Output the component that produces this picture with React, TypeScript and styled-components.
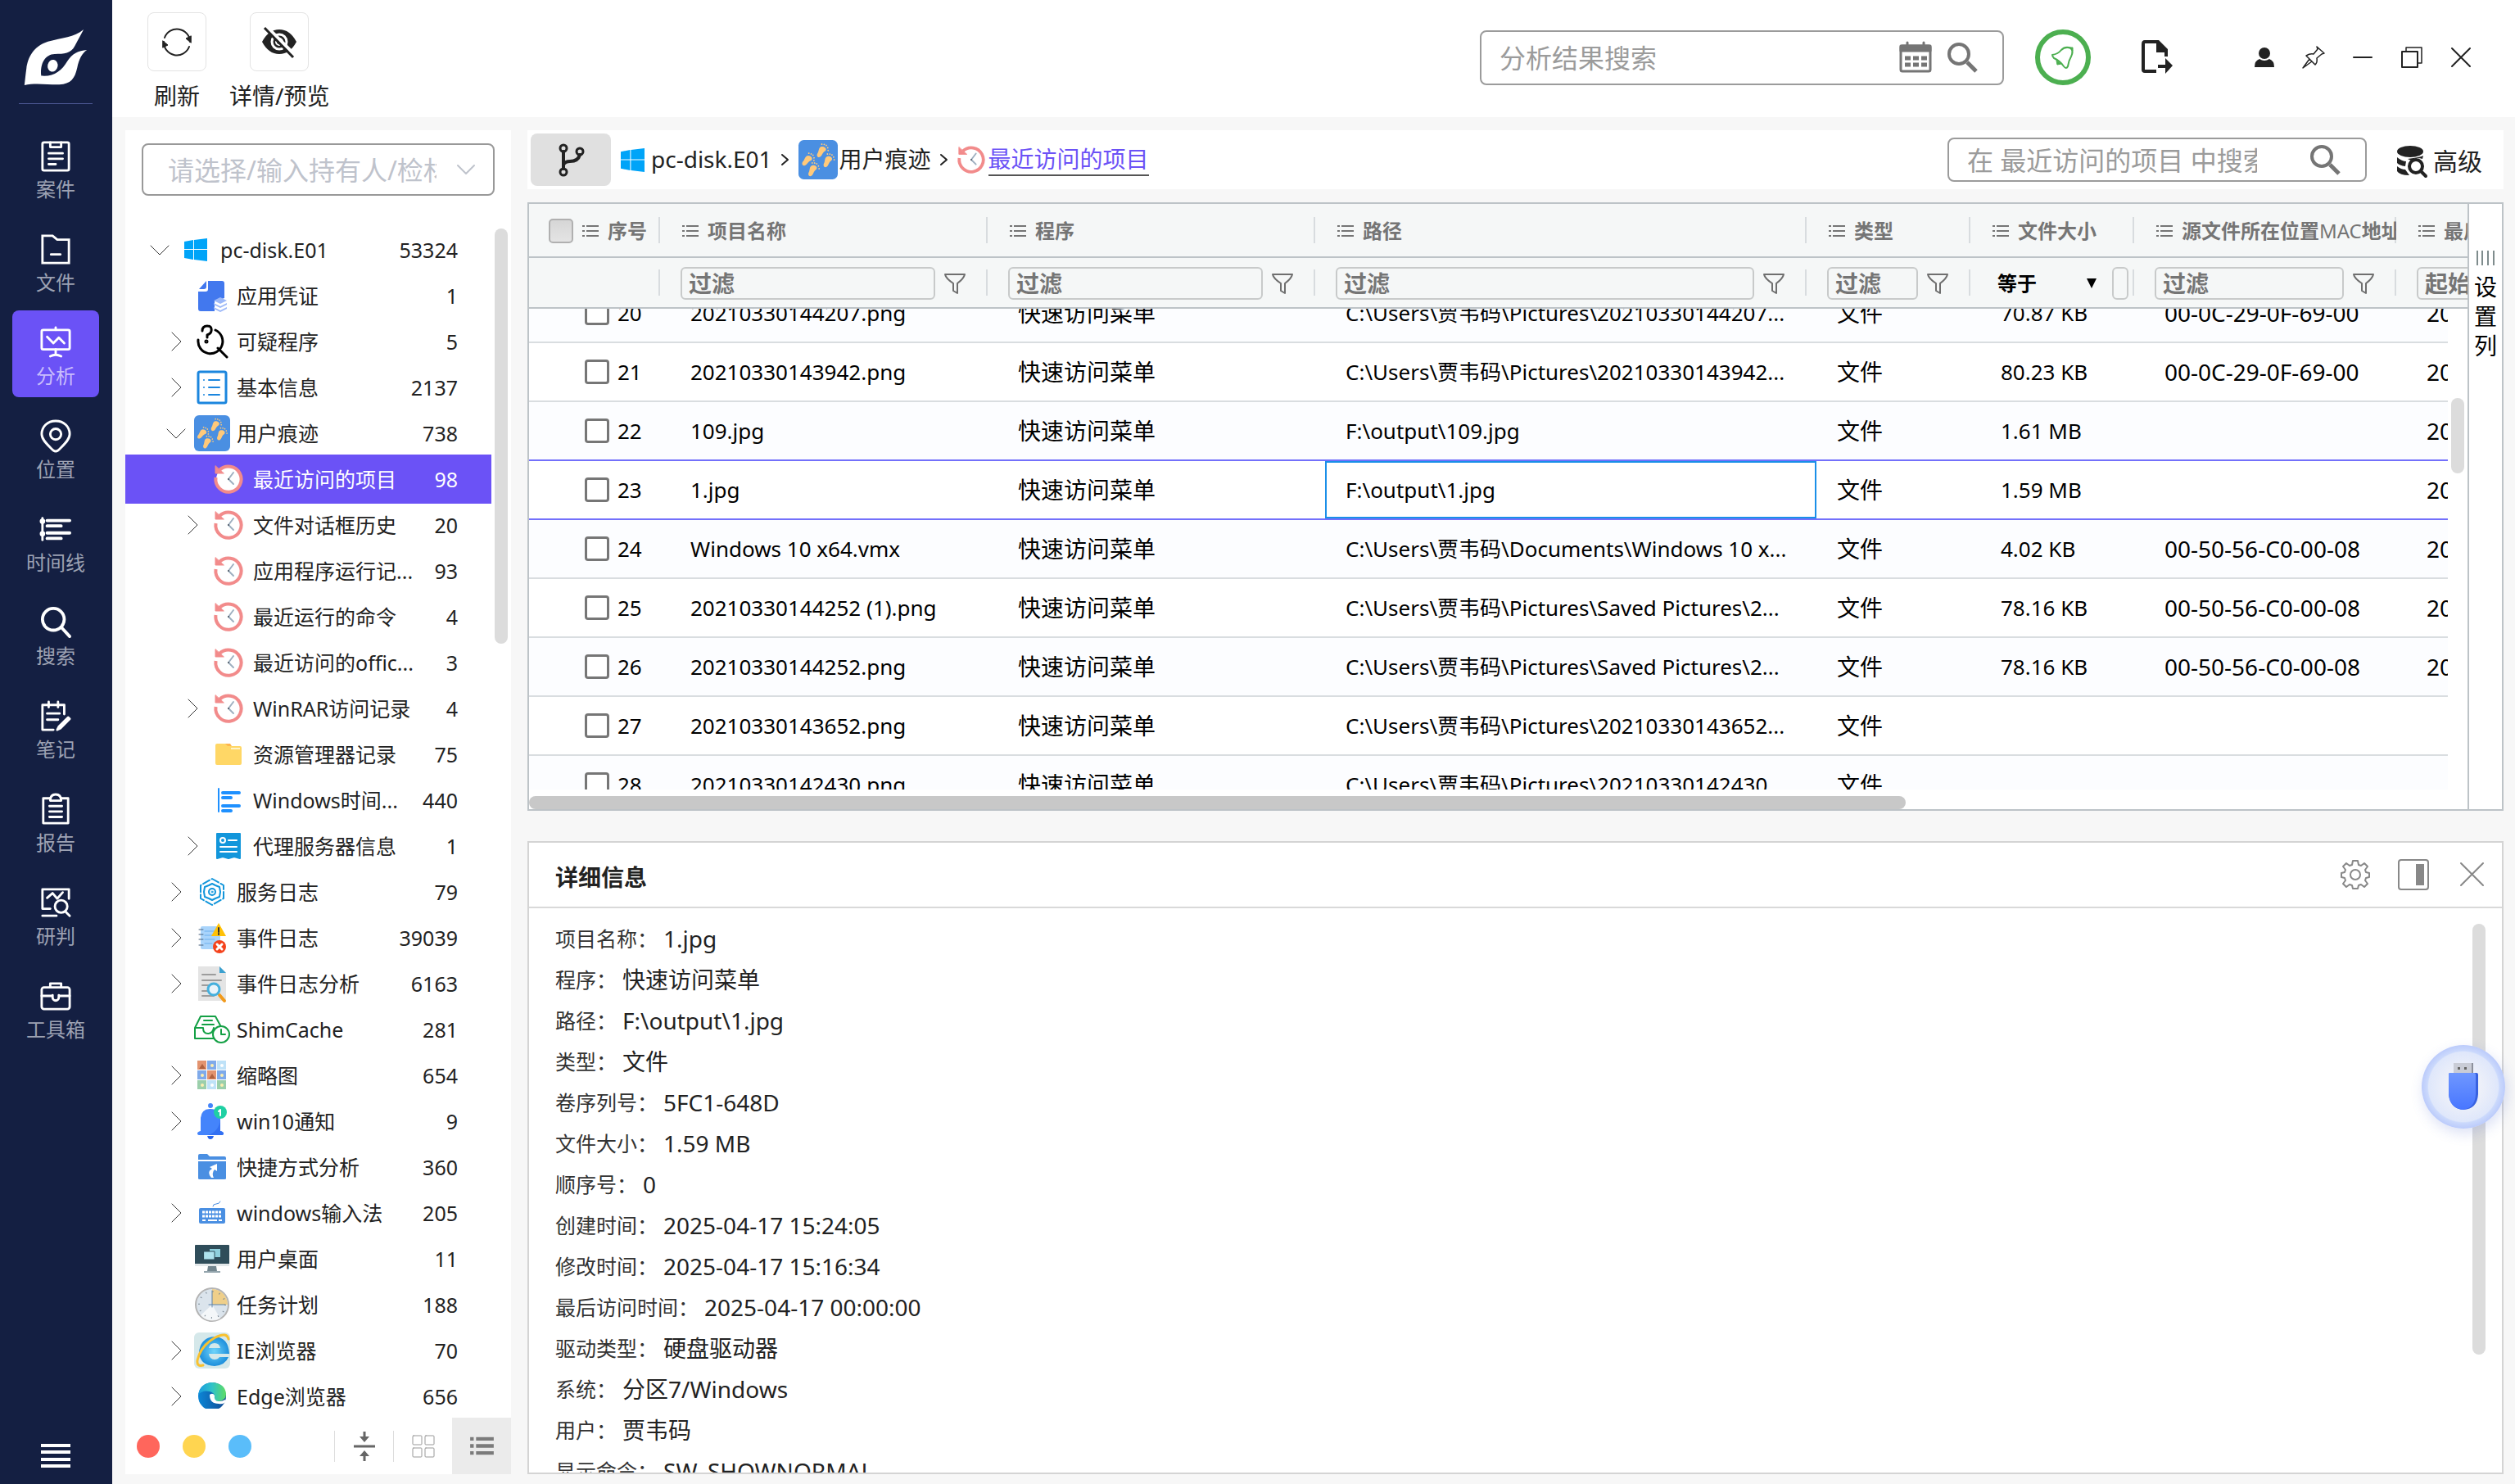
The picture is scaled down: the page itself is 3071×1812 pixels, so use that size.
import React, { useLayoutEffect, useRef } from "react";
import styled, { createGlobalStyle, css } from "styled-components";

const GlobalStyle = createGlobalStyle`
  *, *::before, *::after { box-sizing: border-box; }
  body { margin: 0; background: #f7f7f7; }
  body, button, input, select {
    font-family: "Noto Sans", "Noto Sans CJK SC", sans-serif;
    color: #222;
  }
  button { background: none; border: 0; padding: 0; cursor: pointer; }
  input, select { outline: none; }
  svg { display: block; flex: none; overflow: visible; }
`;

/* ---------- frame ---------- */

const Shell = styled.div`
  display: flex;
  height: 100vh;
  overflow: hidden;
`;

const Sidebar = styled.aside`
  flex: none;
  width: 137px;
  display: flex;
  flex-direction: column;
  align-items: center;
  background: #141f42;
  padding: 35px 16px 20px 15px;
`;

const SideRule = styled.hr`
  width: 90px;
  margin: 21px 0 24px;
  border: 0;
  border-top: 1px solid #4a5590;
`;

const NavList = styled.nav`
  flex: 1;
  display: flex;
  flex-direction: column;
  gap: 8px;
  width: 106px;
`;

const NavButton = styled.button<{ $active?: boolean }>`
  display: flex;
  flex-direction: column;
  align-items: center;
  gap: 3px;
  height: 106px;
  padding: 19px 0 8px;
  border-radius: 8px;
  font-size: 24px;
  line-height: 36px;
  color: ${(p) => (p.$active ? "#c8bdfc" : "#9da2b3")};
  background: ${(p) => (p.$active ? "#6b52f6" : "transparent")};
`;

const Workspace = styled.div`
  flex: 1;
  min-width: 0;
  display: flex;
  flex-direction: column;
`;

/* ---------- header ---------- */

const TopBar = styled.header`
  flex: none;
  display: flex;
  height: 143px;
  padding: 0 36px 0 43px;
  background: #fff;
`;

const ToolGroup = styled.div`
  display: flex;
  gap: 28px;
  padding-top: 15px;
`;

const ToolButton = styled.button`
  display: flex;
  flex-direction: column;
  align-items: center;
  gap: 12px;
  font-size: 28px;
  line-height: 36px;
`;

const ToolTile = styled.span`
  display: grid;
  place-items: center;
  width: 72px;
  height: 72px;
  border: 1px solid #e3e3e3;
  border-radius: 8px;
`;

const TopRight = styled.div`
  display: flex;
  align-items: center;
  height: 140px;
  margin-left: auto;
`;

const SearchBox = styled.div<{ $width: number; $height: number }>`
  display: flex;
  align-items: center;
  justify-content: space-between;
  gap: 18px;
  width: ${(p) => p.$width}px;
  height: ${(p) => p.$height}px;
  padding: 0 30px 0 22px;
  border: 2px solid #9b9b9b;
  border-radius: 8px;
  background: #fff;
`;

const BareInput = styled.input<{ $width?: number }>`
  flex: ${(p) => (p.$width ? `0 0 ${p.$width}px` : "1")};
  min-width: 0;
  height: 48px;
  padding: 0;
  border: 0;
  background: transparent;
  font-size: 32px;
  &::placeholder { color: #9b9b9b; opacity: 1; }
`;

const IconButton = styled.button`
  display: grid;
  place-items: center;
`;

const NoticeButton = styled.button`
  display: grid;
  place-items: center;
  width: 68px;
  height: 68px;
  margin: 0 62px 0 38px;
  border: 6px solid #4caf50;
  border-radius: 50%;
`;

const WindowButtons = styled.div`
  display: flex;
  margin-left: 82px;
`;

const WindowButton = styled(IconButton)`
  width: 60px;
  height: 60px;
`;

/* ---------- body ---------- */

const Body = styled.div`
  flex: 1;
  min-height: 0;
  display: flex;
  gap: 20px;
  padding: 16px 14px 12px 16px;
`;

const TreePanel = styled.section`
  flex: none;
  width: 471px;
  display: flex;
  flex-direction: column;
  background: #fff;
`;

const OwnerPicker = styled.div`
  flex: none;
  display: flex;
  align-items: center;
  justify-content: space-between;
  height: 64px;
  margin: 16px 20px 38px;
  padding: 0 22px 0 30px;
  border: 2px solid #999;
  border-radius: 8px;
  input::placeholder { color: #bfc3cc; }
`;

const TreeViewport = styled.div`
  flex: 1;
  min-height: 0;
  display: flex;
  gap: 4px;
  padding-right: 4px;
  overflow: hidden;
`;

const TreeList = styled.ul`
  flex: 1;
  margin: 0;
  padding: 0;
  list-style: none;
`;

const TreeRow = styled.button<{ $level: number; $active?: boolean }>`
  display: flex;
  align-items: center;
  width: 100%;
  height: 56px;
  padding: 0 41px 0 ${(p) => 27 + p.$level * 20}px;
  font-size: 25px;
  line-height: 36px;
  white-space: nowrap;
  text-align: left;
  ${(p) =>
    p.$active &&
    css`
      height: 60px;
      margin: -2px 0;
      background: #6b52f6;
      color: #fff;
    `}
`;

const TreeToggle = styled.span`
  display: grid;
  place-items: center;
  width: 30px;
  margin-right: 7px;
`;

const TreeIcon = styled.span`
  display: grid;
  place-items: center;
  width: 44px;
  height: 44px;
  margin-right: 8px;
`;

const TreeCount = styled.span`
  margin-left: auto;
`;

const ScrollThumb = styled.div<{ $length: number; $top?: number }>`
  flex: none;
  width: 16px;
  height: ${(p) => p.$length}px;
  margin-top: ${(p) => p.$top ?? 0}px;
  border-radius: 8px;
  background: #dcdcdc;
`;

const TreeFooter = styled.div`
  flex: none;
  display: flex;
  align-items: center;
  height: 69px;
  margin-top: 11px;
  padding-left: 14px;
`;

const Dot = styled.button<{ $color: string }>`
  width: 28px;
  height: 28px;
  margin-right: 28px;
  border-radius: 50%;
  background: ${(p) => p.$color};
`;

const FooterTools = styled.div`
  display: flex;
  align-items: center;
  margin-left: auto;
`;

const FooterTool = styled.button<{ $active?: boolean; $divided?: boolean }>`
  display: grid;
  place-items: center;
  width: 72px;
  height: ${(p) => (p.$active ? 69 : 38)}px;
  border-left: ${(p) => (p.$divided ? "1px solid #ddd" : "0")};
  background: ${(p) => (p.$active ? "#ebebeb" : "transparent")};
`;

const Main = styled.main`
  flex: 1;
  min-width: 0;
  display: flex;
  flex-direction: column;
`;

const PathBar = styled.div`
  flex: none;
  display: flex;
  align-items: center;
  height: 72px;
  margin-bottom: 16px;
  padding: 0 26px 0 4px;
  background: #fff;
  font-size: 28px;
  line-height: 38px;
`;

const BranchButton = styled(IconButton)`
  width: 98px;
  height: 64px;
  margin-right: 12px;
  border-radius: 8px;
  background: #e0e0e0;
`;

const Crumb = styled.a<{ $current?: boolean; $gap?: number }>`
  display: flex;
  align-items: center;
  gap: ${(p) => p.$gap ?? 4}px;
  color: ${(p) => (p.$current ? "#6b52f6" : "#222")};
  text-decoration: none;
  span { border-bottom: 2px solid ${(p) => (p.$current ? "#555" : "transparent")}; }
`;

const CrumbMark = styled.span`
  display: grid;
  place-items: center;
  width: 32px;
`;

const PathTools = styled.div`
  display: flex;
  align-items: center;
  gap: 36px;
  margin-left: auto;
`;

const AdvancedButton = styled.button`
  display: flex;
  align-items: center;
  gap: 8px;
  padding-top: 4px;
  font-size: 30px;
  line-height: 38px;
`;

/* ---------- data grid ---------- */

const GridPanel = styled.section`
  flex: 743 1 0;
  min-height: 0;
  display: flex;
  border: 2px solid #bdc3c7;
  background: #fff;
`;

const GridMain = styled.div`
  flex: 1;
  min-width: 0;
  display: flex;
  flex-direction: column;
`;

const GridHead = styled.div`
  flex: none;
  overflow: hidden;
  background: #f5f7f7;
`;

const GridTable = styled.table`
  table-layout: fixed;
  border-collapse: separate;
  border-spacing: 0;
  th, td { padding: 0; text-align: left; font-weight: 400; }
`;

const HeadCell = styled.th<{ $height: number }>`
  height: ${(p) => p.$height}px;
  border-bottom: 2px solid #bdc3c7;
  background: linear-gradient(#d8dcdf, #d8dcdf) right center / 2px 32px no-repeat;
`;

const HeadLabel = styled.div<{ $first?: boolean }>`
  display: flex;
  align-items: center;
  gap: 11px;
  padding: 2px 0 0 ${(p) => (p.$first ? 24 : 27)}px;
  overflow: hidden;
  font-size: 24px;
  line-height: 36px;
  white-space: nowrap;
  color: #757575;
  b { font-weight: 700; }
`;

const AllBox = styled.input`
  appearance: none;
  flex: none;
  width: 30px;
  height: 30px;
  margin: 0;
  border: 2px solid #b0b0b0;
  border-radius: 5px;
  background: linear-gradient(#d6d6d6, #e4e4e4);
`;

const FilterCell = styled.div`
  display: flex;
  align-items: center;
  gap: 11px;
  padding: 2px 27px 0 25px;
`;

const SizeFilterCell = styled(FilterCell)`
  padding: 2px 7px 0 33px;
  gap: 19px;
`;

const FilterInput = styled.input`
  flex: 1;
  min-width: 0;
  height: 40px;
  padding: 0 8px;
  border: 2px solid #c8caca;
  border-radius: 6px;
  background: transparent;
  font-size: 28px;
  font-weight: 700;
  &::placeholder { color: #757575; opacity: 1; }
`;

const OperatorPick = styled.label`
  flex: none;
  display: flex;
  align-items: center;
  justify-content: space-between;
  width: 121px;
  select {
    appearance: none;
    width: 104px;
    padding: 0;
    border: 0;
    background: transparent;
    font-size: 24px;
    font-weight: 700;
    line-height: 36px;
    color: #000;
  }
`;

const GridBody = styled.div`
  flex: 1;
  min-height: 0;
  display: flex;
  gap: 4px;
  padding-right: 4px;
`;

const RowsViewport = styled.div`
  flex: 1;
  min-width: 0;
  overflow: hidden;
`;

const DataRow = styled.tr<{ $shade: boolean; $line: string }>`
  color: #000;
  td {
    height: 72px;
    border-bottom: 2px solid ${(p) => p.$line};
    background: ${(p) => (p.$shade ? "#fcfdff" : "#fff")};
  }
`;

const CellText = styled.div<{ $small?: boolean; $focus?: boolean }>`
  height: 70px;
  padding-left: 25px;
  overflow: hidden;
  font-size: ${(p) => (p.$small ? 26 : 28)}px;
  line-height: 70px;
  white-space: nowrap;
  box-shadow: ${(p) => (p.$focus ? "inset 0 0 0 2px #1a8fe8" : "none")};
`;

const NumberCell = styled.label`
  display: flex;
  align-items: center;
  gap: 10px;
  padding-left: 68px;
  font-size: 26px;
  input {
    appearance: none;
    width: 30px;
    height: 30px;
    margin: 0;
    border: 3px solid #767676;
    border-radius: 4px;
    background: #fff;
  }
`;

const HScroll = styled.div`
  flex: none;
  height: 24px;
  padding-top: 8px;
  div {
    width: 71%;
    height: 16px;
    border-radius: 8px;
    background: #c8c8c8;
  }
`;

const ColumnsTab = styled.button`
  flex: none;
  display: flex;
  flex-direction: column;
  align-items: center;
  gap: 8px;
  width: 42px;
  padding-top: 57px;
  border-left: 2px solid #bdc3c7;
  font-size: 28px;
  line-height: 36px;
  color: #000;
  span { width: 28px; }
`;

/* ---------- details ---------- */

const DetailPanel = styled.section`
  flex: 773 1 0;
  min-height: 0;
  display: flex;
  flex-direction: column;
  margin-top: 37px;
  border: 2px solid #d4d4d4;
  background: #fff;
`;

const DetailHead = styled.div`
  flex: none;
  display: flex;
  align-items: center;
  justify-content: space-between;
  height: 80px;
  padding: 0 17px 0 32px;
  border-bottom: 2px solid #d9d9d9;
  h2 { margin: 6px 0 0; font-size: 28px; line-height: 38px; }
`;

const DetailTools = styled.div`
  display: flex;
  gap: 34px;
`;

const DetailBody = styled.div`
  flex: 1;
  min-height: 0;
  display: flex;
  justify-content: space-between;
  padding: 12px 20px 0 32px;
  overflow: hidden;
`;

const Fields = styled.dl`
  margin: 0;
  div { display: flex; gap: 7px; height: 50px; line-height: 50px; white-space: nowrap; }
  dt { font-size: 25px; color: #333; }
  dd { margin: 0; font-size: 28px; }
`;

const DriveBubble = styled.button`
  position: fixed;
  right: 12px;
  bottom: 434px;
  display: grid;
  place-items: center;
  width: 102px;
  height: 102px;
  border-radius: 50%;
  background: radial-gradient(circle at 50% 50%, #edf0f9 30%, #dfe7fb 59%, #cbd9fc 61%, #b9c9fb 72%);
  box-shadow: 2px 6px 16px rgba(60, 90, 200, 0.18);
`;

/* ---------- icons ---------- */

type SvgProps = { w: number; h?: number; box?: string; sw?: number; color?: string; fill?: string; children: React.ReactNode };
const Svg = ({ w, h = w, box, sw = 3, color = "#fff", fill = "none", children }: SvgProps) => (
  <svg width={w} height={h} viewBox={box ?? `0 0 ${w} ${h}`} fill={fill} stroke={color} strokeWidth={sw} strokeLinecap="round" strokeLinejoin="round" aria-hidden="true">
    {children}
  </svg>
);

const Logo = () => (
  <Svg w={78} h={70} box="76 86 190 170" color="none" fill="#fff">
    <path d="M254 88C226 112 190 112 148 124C104 138 88 172 84 204C81 225 80 240 78 254C110 246 150 253 182 252C216 250 228 234 235 202C240 176 250 158 264 149C238 151 220 160 206 182C188 212 166 229 128 226C124 188 140 162 168 161C196 161 216 160 228 137C238 118 246 104 254 88Z" />
    <ellipse cx="162" cy="196" rx="15" ry="18" transform="rotate(12 162 196)" />
  </Svg>
);

const navIcons: Record<string, React.ReactNode> = {
  case: <><rect x="3" y="3" width="34" height="36" rx="2" /><path d="M13 3v6h14V3M11 17h18M11 24h18M11 31h9" /></>,
  file: <><path d="M3 3h13l6 5h15v30H3Z" strokeLinejoin="miter" /><path d="M14 27h12" /></>,
  analyse: <><rect x="2" y="4" width="36" height="25" rx="2" /><path d="M20 1v3M9 13l8 8 7-7 7 7M20 29v7M13 38q7-4 14 0" /></>,
  place: <><path d="M20 1C9 1 2 9 2 18C2 26 11 33 17 39q3 2 6 0C29 33 38 26 38 18C38 9 31 1 20 1Z" /><circle cx="20" cy="18" r="7" /></>,
  timeline: <><path d="M3 6v28" /><path d="M9 9h29M9 16h18M9 25h29M9 32h18" strokeWidth="4" /><circle cx="3" cy="10" r="2" /><circle cx="3" cy="26" r="2" /></>,
  search: <><circle cx="17" cy="16" r="14" strokeWidth="4" /><path d="M27 26l11 12" strokeWidth="4" /></>,
  note: <><path d="M31 18V6H3v32h14M11 2v7M23 2v7M9 17h16M9 25h14" /><path d="M24 34l12-12 2 2-12 12-4 2Z" fill="#fff" /></>,
  report: <><path d="M12 6H4v32h32V6h-8M13 9q0-8 7-8t7 8ZM12 16h16M12 23h16M12 30h16" /></>,
  judge: <><path d="M37 15V3H3v25h10M3 37h18M9 14l7-6 6 7 7-8" /><circle cx="27" cy="25" r="8" /><path d="M33 32l5 5" /></>,
  toolbox: <><rect x="2" y="9" width="36" height="28" rx="3" /><path d="M13 9V4h14v5M2 20h14M24 20h14M16 19v3a4 4 0 0 0 8 0v-3" /></>,
};

const Windows = ({ size }: { size: number }) => (
  <Svg w={size} box="0 0 28 28" color="none" fill="#00a4f8">
    <path d="M0 4l11-2v11H0ZM12 2l16-2v13H12ZM0 14h11v12L0 24ZM12 14h16v14l-16-2Z" />
  </Svg>
);

const Foot = ({ t }: { t: string }) => (
  <g transform={t}>
    <path d="M-3-6C-6-4-4 0-4 3C-5 8-1 10 1 7C3 4 1 1 4-3C5-7 0-8-3-6Z" />
    <circle cx="-4" cy="-9" r="1" /><circle cx="-1" cy="-10" r="1" /><circle cx="2" cy="-10" r="1" /><circle cx="5" cy="-8" r="1" /><circle cx="7" cy="-5" r="1" />
  </g>
);
const Feet = ({ size }: { size: number }) => (
  <Svg w={size} box="0 0 44 44" color="none" fill="#ffc97a">
    <rect width="44" height="44" rx="6" fill="#4a8fe2" />
    <Foot t="translate(26 13) rotate(25) scale(.85)" />
    <Foot t="translate(10 23) rotate(35) scale(.85)" />
    <Foot t="translate(33 24) rotate(20) scale(.85)" />
    <Foot t="translate(16 34) rotate(20) scale(.85)" />
  </Svg>
);

const History = ({ size = 36 }: { size?: number }) => (
  <Svg w={size} box="0 0 36 36" sw={4} color="#f28b8b">
    <circle cx="18" cy="18" r="15" fill="#fff" stroke="none" />
    <path d="M7 7A15.600 15.600 0 1 1 2.500 16" strokeLinecap="butt" />
    <path d="M2 2v9h10Z" fill="#f28b8b" strokeWidth="1" />
    <path d="M24 10l-6 8 6 6" stroke="#9fb0c0" strokeWidth="2" />
    <circle cx="18" cy="18" r="1" fill="#4a5560" stroke="none" />
  </Svg>
);

const treeIcons: Record<string, React.ReactNode> = {
  windows: <Windows size={28} />,
  cert: (
    <Svg w={36} h={38} color="none" fill="#4278ee">
      <path d="M13 1h17a3 3 0 0 1 3 3v18l-12 4v12H4a3 3 0 0 1-3-3V14h9a3 3 0 0 0 3-3Z" /><path d="M2 11L11 1v7a3 3 0 0 1-3 3Z" />
      <path d="M28 21l8 4-8 4-8-4ZM20 28l8 4 8-4v2l-8 4-8-4ZM20 33l8 4 8-4v2l-8 4-8-4Z" fill="#9cb8f8" />
    </Svg>
  ),
  suspect: (
    <Svg w={38} h={40} color="#000">
      <path d="M2 18a15 15 0 1 0 21-12M26 28l11 11M7 7q0-6 6-6t5 6q0 3-5 5v3" /><circle cx="12" cy="20" r="1" />
    </Svg>
  ),
  info: (
    <Svg w={38} h={42} color="#1b86de">
      <rect x="2" y="2" width="34" height="38" rx="2" /><path d="M15 12h13M15 21h13M15 30h13M9 12h0M9 21h0M9 30h0" strokeWidth="2" />
    </Svg>
  ),
  feet: <Feet size={44} />,
  history: <History />,
  folder: (
    <Svg w={32} h={28} color="none" fill="#ffd766">
      <path d="M2 1h14l3 3h11a2 2 0 0 1 2 2v19a2 2 0 0 1-2 2H2a2 2 0 0 1-2-2V3a2 2 0 0 1 2-2Z" /><path d="M12 1h6l2 3h-5Z" fill="#ffb64d" /><path d="M19 6h11v2H19Z" fill="#fff3c8" />
    </Svg>
  ),
  timeline: (
    <Svg w={28} h={30} color="#1e90ff" sw={4}>
      <path d="M2 1v28" strokeWidth="2" /><path d="M7 6h20M7 12h10M7 22h20M7 28h10" />
    </Svg>
  ),
  proxy: (
    <Svg w={32} h={32} color="#fff" sw={2}>
      <path d="M2 1h28v30l-7-2-7 2-7-2-7 2Z" fill="#1296db" stroke="#1296db" /><circle cx="9" cy="9" r="3" /><path d="M16 9h10M6 17h20M6 23h20" />
    </Svg>
  ),
  service: (
    <Svg w={32} h={34} color="#1296db" sw={2}>
      <path d="M16 1l14 8v16l-14 8-14-8V9Z" strokeDasharray="9 3" /><path d="M16 7l4 2 5 2 1 6-1 6-5 2-4 2-4-2-5-2-1-6 1-6 5-2Z" /><circle cx="16" cy="17" r="4" /><circle cx="16" cy="17" r="1" strokeWidth="1" />
    </Svg>
  ),
  events: (
    <Svg w={34} h={38} color="none">
      <rect x="3" y="5" width="24" height="28" rx="2" fill="#a9d4fb" /><path d="M8 11h14M8 16h14M8 21h12M8 26h9" stroke="#6fb0ee" strokeWidth="1" />
      <path d="M1 9h5M1 15h5M1 21h5M1 28h5" stroke="#48607c" strokeWidth="1" />
      <path d="M25 1l9 16H16Z" fill="#ffc107" /><path d="M25 7v5M25 14v1" stroke="#333" strokeWidth="2" />
      <circle cx="26" cy="30" r="8" fill="#f4421c" /><path d="M23 27l6 6M29 27l-6 6" stroke="#fff" strokeWidth="3" />
    </Svg>
  ),
  eventsDoc: (
    <Svg w={36} h={44} color="none">
      <path d="M1 1h26l8 8v34H1Z" fill="#e4e4e4" /><path d="M27 1v8h8Z" fill="#3ba0cf" />
      <path d="M6 11h16M6 18h23M6 24h8M6 31h8M6 37h14" stroke="#9c9c9c" strokeWidth="2" />
      <path d="M27 36l6 7" stroke="#f19a1c" strokeWidth="4" /><circle cx="20" cy="29" r="7" fill="#eaf4fa" stroke="#45b0dd" strokeWidth="3" />
    </Svg>
  ),
  shim: (
    <Svg w={44} h={34} color="#14a045" sw={2}>
      <path d="M24 28H1V15L8 1h18l6 11M1 15h10q0 7 6 7t7-7M12 6h10M10 11h14" /><circle cx="33" cy="23" r="10" fill="#fff" /><path d="M33 17v6h5" />
    </Svg>
  ),
  thumbs: (
    <Svg w={34} h={34} color="none">
      {["#e3936f", "#7faaea", "#bfe2f8", "#7faaea", "#e3936f", "#7faaea", "#9bcfab", "#bfe2f8", "#9bcfab"].map((c, i) => (
        <g key={i}>
          <rect x={(i % 3) * 12 - 1} y={Math.floor(i / 3) * 12 - 1} width="11" height="11" fill={c} />
          {c === "#e3936f" ? <path d={`M${(i % 3) * 12 + 1} ${Math.floor(i / 3) * 12 + 9}l4-6 4 6Z`} fill="#b0613f" /> : <circle cx={(i % 3) * 12 + 5} cy={Math.floor(i / 3) * 12 + 5} r="2" fill={c === "#bfe2f8" ? "#fff" : "#fbeeb0"} />}
        </g>
      ))}
    </Svg>
  ),
  bell: (
    <Svg w={38} h={44} color="none" fill="#4484fb">
      <circle cx="17" cy="3" r="3" /><path d="M13 40h8q-1 4-4 4t-4-4Z" fill="#2563eb" />
      <path d="M5 34V18Q6 7 17 7t12 11v16q4 1 4 3t-3 2H4q-3 0-3-2t4-3Z" /><path d="M29 20v14q4 1 4 3t-3 2H14q13-4 15-19Z" fill="#3370f2" />
      <circle cx="29" cy="11" r="8" fill="#1fd0a3" /><path d="M27 10l2-2v7" stroke="#fff" strokeWidth="2" />
    </Svg>
  ),
  shortcut: (
    <Svg w={34} h={32} color="none" fill="#4a8fe2">
      <path d="M0 2q0-2 2-2h9l3 3h18q2 0 2 2v2H0ZM0 9h34v21q0 1-2 1H2q-2 0-2-1Z" /><path d="M16 29q-6-7 1-11l-3-2 9-4v9l-3-2q-4 4-1 10Z" fill="#fff" />
    </Svg>
  ),
  keyboard: (
    <Svg w={32} h={28} color="none">
      <path d="M17 6q0-3 4-3t5-3" stroke="#4a8fe2" strokeWidth="1" /><rect y="8" width="32" height="19" rx="2" fill="#4a8fe2" />
      <path d="M4 13h24M4 18h24" stroke="#fff" strokeWidth="3" strokeDasharray="3 1" strokeLinecap="butt" /><path d="M4 23h4M11 23h11M24 23h4" stroke="#fff" strokeWidth="2" strokeLinecap="butt" />
    </Svg>
  ),
  desktop: (
    <Svg w={42} h={34} color="none">
      <rect width="42" height="25" rx="1" fill="#2f4d5a" /><path d="M0 23h42v3H0Z" fill="#e3e8ea" /><path d="M16 26h10l1 6H15Z" fill="#73868f" /><path d="M11 32h20v2H11Z" fill="#94a5ad" />
      <rect x="18" y="5" width="13" height="10" fill="#8fd0dd" /><rect x="11" y="8" width="13" height="10" fill="#aee3ee" stroke="#2f4d5a" strokeWidth="1" />
    </Svg>
  ),
  clock: (
    <Svg w={44} color="none">
      <circle cx="22" cy="22" r="20" fill="#dbe4ec" stroke="#b4b4b4" strokeWidth="2" /><path d="M22 22V3a19 19 0 0 1 19 19Z" fill="#efcf8a" />
      <path d="M22 22L8 35a19 19 0 0 0 24 4Z" fill="#fff" opacity=".7" /><path d="M22 5v20M18 22h20" stroke="#5c83ab" strokeWidth="1" />
      <circle cx="22" cy="22" r="16" stroke="#7a8894" strokeWidth="2" strokeDasharray="1 7.380" strokeLinecap="butt" />
    </Svg>
  ),
  ie: (
    <Svg w={44} color="none">
      <defs><radialGradient id="ieBlue"><stop offset="0" stopColor="#6fd4fa" /><stop offset="1" stopColor="#1d8fdc" /></radialGradient></defs>
      <rect width="44" height="44" rx="6" fill="#d5e8ea" />
      <path d="M43 26H18q1 7 7 7 4 0 6-3h11Q38 40 25 41 7 40 6 24 8 6 25 5 42 6 43 26ZM18 19h14q-1-6-7-6t-7 6Z" fill="url(#ieBlue)" fillRule="evenodd" />
      <path d="M11 40Q3 42 4 34 8 16 26 6 40-1 42 8" stroke="#f9c12f" strokeWidth="3" />
    </Svg>
  ),
  edge: (
    <Svg w={34} color="none">
      <defs>
        <linearGradient id="edgeTop"><stop offset="0" stopColor="#1a9be0" /><stop offset=".5" stopColor="#30c3c8" /><stop offset="1" stopColor="#5fdc62" /></linearGradient>
        <linearGradient id="edgeLow"><stop offset="0" stopColor="#0c86d6" /><stop offset="1" stopColor="#124b94" /></linearGradient>
      </defs>
      <circle cx="17" cy="17" r="17" fill="url(#edgeLow)" /><path d="M0 15Q2 1 17 0q16 1 17 14 0 8-9 9-6 0-5-4 1-6-6-8Q5 9 0 15Z" fill="url(#edgeTop)" />
      <path d="M14 15q4-3 6 1-1 7 5 7 5 0 8-2 2 1-1 4-3 2-7 1-11 0-11-11Z" fill="#fff" />
    </Svg>
  ),
};

const Magnifier = () => (
  <Svg w={38} color="#757575" sw={4}><circle cx="15" cy="15" r="12" /><path d="M25 25l11 11" strokeLinecap="butt" strokeWidth="5" /></Svg>
);
const Funnel = () => (
  <Svg w={26} color="#6f6f6f" sw={2}><path d="M1 2h24q-1 5-9 11v12l-5-3v-9Q2 7 1 2Z" /></Svg>
);
const ListGlyph = ({ w = 20, h = 16, color = "#757575", sw = 2 }: { w?: number; h?: number; color?: string; sw?: number }) => (
  <Svg w={w} h={h} box="0 0 20 16" color={color} sw={sw}>
    <path d="M5 2h15M5 8h15M5 14h15M0 2h3M0 8h3M0 14h3" strokeLinecap="butt" />
  </Svg>
);

/* ---------- data ---------- */

const nav: [string, string][] = [
  ["case", "案件"], ["file", "文件"], ["analyse", "分析"], ["place", "位置"], ["timeline", "时间线"],
  ["search", "搜索"], ["note", "笔记"], ["report", "报告"], ["judge", "研判"], ["toolbox", "工具箱"],
];

type Node = { icon: string; name: string; count: number; level: number; open?: "open" | "closed"; active?: boolean };
const tree: Node[] = [
  { icon: "windows", name: "pc-disk.E01", count: 53324, level: 0, open: "open" },
  { icon: "cert", name: "应用凭证", count: 1, level: 1 },
  { icon: "suspect", name: "可疑程序", count: 5, level: 1, open: "closed" },
  { icon: "info", name: "基本信息", count: 2137, level: 1, open: "closed" },
  { icon: "feet", name: "用户痕迹", count: 738, level: 1, open: "open" },
  { icon: "history", name: "最近访问的项目", count: 98, level: 2, active: true },
  { icon: "history", name: "文件对话框历史", count: 20, level: 2, open: "closed" },
  { icon: "history", name: "应用程序运行记...", count: 93, level: 2 },
  { icon: "history", name: "最近运行的命令", count: 4, level: 2 },
  { icon: "history", name: "最近访问的offic...", count: 3, level: 2 },
  { icon: "history", name: "WinRAR访问记录", count: 4, level: 2, open: "closed" },
  { icon: "folder", name: "资源管理器记录", count: 75, level: 2 },
  { icon: "timeline", name: "Windows时间...", count: 440, level: 2 },
  { icon: "proxy", name: "代理服务器信息", count: 1, level: 2, open: "closed" },
  { icon: "service", name: "服务日志", count: 79, level: 1, open: "closed" },
  { icon: "events", name: "事件日志", count: 39039, level: 1, open: "closed" },
  { icon: "eventsDoc", name: "事件日志分析", count: 6163, level: 1, open: "closed" },
  { icon: "shim", name: "ShimCache", count: 281, level: 1 },
  { icon: "thumbs", name: "缩略图", count: 654, level: 1, open: "closed" },
  { icon: "bell", name: "win10通知", count: 9, level: 1, open: "closed" },
  { icon: "shortcut", name: "快捷方式分析", count: 360, level: 1 },
  { icon: "keyboard", name: "windows输入法", count: 205, level: 1, open: "closed" },
  { icon: "desktop", name: "用户桌面", count: 11, level: 1 },
  { icon: "clock", name: "任务计划", count: 188, level: 1 },
  { icon: "ie", name: "IE浏览器", count: 70, level: 1, open: "closed" },
  { icon: "edge", name: "Edge浏览器", count: 656, level: 1, open: "closed" },
];

const headWidths = [160, 400, 400, 600, 200, 200, 320, 320];
const bodyWidths = [172, 400, 400, 600, 200, 200, 320, 320];

const rows = [
  { no: 20, name: "20210330144207.png", path: "C:\\Users\\贾韦码\\Pictures\\20210330144207...", size: "70.87 KB", mac: "00-0C-29-0F-69-00", date: "20" },
  { no: 21, name: "20210330143942.png", path: "C:\\Users\\贾韦码\\Pictures\\20210330143942...", size: "80.23 KB", mac: "00-0C-29-0F-69-00", date: "20" },
  { no: 22, name: "109.jpg", path: "F:\\output\\109.jpg", size: "1.61 MB", mac: "", date: "20" },
  { no: 23, name: "1.jpg", path: "F:\\output\\1.jpg", size: "1.59 MB", mac: "", date: "20" },
  { no: 24, name: "Windows 10 x64.vmx", path: "C:\\Users\\贾韦码\\Documents\\Windows 10 x...", size: "4.02 KB", mac: "00-50-56-C0-00-08", date: "20" },
  { no: 25, name: "20210330144252 (1).png", path: "C:\\Users\\贾韦码\\Pictures\\Saved Pictures\\2...", size: "78.16 KB", mac: "00-50-56-C0-00-08", date: "20" },
  { no: 26, name: "20210330144252.png", path: "C:\\Users\\贾韦码\\Pictures\\Saved Pictures\\2...", size: "78.16 KB", mac: "00-50-56-C0-00-08", date: "20" },
  { no: 27, name: "20210330143652.png", path: "C:\\Users\\贾韦码\\Pictures\\20210330143652...", size: "", mac: "", date: "" },
  { no: 28, name: "20210330142430.png", path: "C:\\Users\\贾韦码\\Pictures\\20210330142430...", size: "", mac: "", date: "" },
];
const selectedNo = 23;

const fields: [string, string][] = [
  ["项目名称", "1.jpg"], ["程序", "快速访问菜单"], ["路径", "F:\\output\\1.jpg"], ["类型", "文件"],
  ["卷序列号", "5FC1-648D"], ["文件大小", "1.59 MB"], ["顺序号", "0"],
  ["创建时间", "2025-04-17 15:24:05"], ["修改时间", "2025-04-17 15:16:34"], ["最后访问时间", "2025-04-17 00:00:00"],
  ["驱动类型", "硬盘驱动器"], ["系统", "分区7/Windows"], ["用户", "贾韦码"], ["显示命令", "SW_SHOWNORMAL"],
];

/* ---------- parts ---------- */

const Cols = ({ widths }: { widths: number[] }) => (
  <colgroup>{widths.map((w, i) => <col key={i} style={{ width: w }} />)}</colgroup>
);

const tableWidth = (widths: number[]) => ({ width: widths.reduce((a, b) => a + b, 0) });

function Rows() {
  const view = useRef<HTMLDivElement>(null);
  useLayoutEffect(() => {
    if (view.current) view.current.scrollTop = 30;
  }, []);
  return (
    <RowsViewport ref={view}>
      <GridTable style={tableWidth(bodyWidths)}>
        <Cols widths={bodyWidths} />
        <tbody>
          {rows.map((r) => (
            <DataRow key={r.no} $shade={r.no % 2 === 0} $line={r.no === selectedNo || r.no === selectedNo - 1 ? "#7370fb" : "#d9dde0"}>
              <td><NumberCell><input type="checkbox" />{r.no}</NumberCell></td>
              <td><CellText $small>{r.name}</CellText></td>
              <td><CellText>快速访问菜单</CellText></td>
              <td><CellText $small $focus={r.no === selectedNo}>{r.path}</CellText></td>
              <td><CellText>文件</CellText></td>
              <td><CellText $small>{r.size}</CellText></td>
              <td><CellText>{r.mac}</CellText></td>
              <td><CellText>{r.date}</CellText></td>
            </DataRow>
          ))}
        </tbody>
      </GridTable>
    </RowsViewport>
  );
}

function TextFilter() {
  return (
    <FilterCell>
      <FilterInput placeholder="过滤" aria-label="过滤" />
      <IconButton aria-label="筛选"><Funnel /></IconButton>
    </FilterCell>
  );
}

function Grid() {
  const titles: React.ReactNode[] = [<b>序号</b>, <b>项目名称</b>, <b>程序</b>, <b>路径</b>, <b>类型</b>, <b>文件大小</b>, <span><b>源文件所在位置</b>MAC<b>地址</b></span>, <b>最后</b>];
  return (
    <GridPanel>
      <GridMain>
        <GridHead>
          <GridTable style={tableWidth(headWidths)}>
            <Cols widths={headWidths} />
            <thead>
              <tr>
                {titles.map((t, i) => (
                  <HeadCell key={i} $height={66}>
                    <HeadLabel $first={i === 0}>
                      {i === 0 && <AllBox type="checkbox" aria-label="全选" />}
                      <ListGlyph />
                      {t}
                    </HeadLabel>
                  </HeadCell>
                ))}
              </tr>
              <tr>
                <HeadCell $height={62} />
                {[1, 2, 3, 4].map((i) => (
                  <HeadCell key={i} $height={62}><TextFilter /></HeadCell>
                ))}
                <HeadCell $height={62}>
                  <SizeFilterCell>
                    <OperatorPick>
                      <select aria-label="比较方式"><option>等于</option></select>
                      <Svg w={12} color="none" fill="#000"><path d="M0 0h12l-6 12Z" /></Svg>
                    </OperatorPick>
                    <FilterInput aria-label="文件大小" />
                  </SizeFilterCell>
                </HeadCell>
                <HeadCell $height={62}><TextFilter /></HeadCell>
                <HeadCell $height={62}>
                  <FilterCell><FilterInput placeholder="起始" aria-label="起始" /></FilterCell>
                </HeadCell>
              </tr>
            </thead>
          </GridTable>
        </GridHead>
        <GridBody>
          <Rows />
          <ScrollThumb $length={92} $top={109} />
        </GridBody>
        <HScroll><div /></HScroll>
      </GridMain>
      <ColumnsTab>
        <Svg w={22} h={18} color="#7f8c8d" sw={2}><path d="M1 0v18M7 0v18M14 0v18M21 0v18" strokeLinecap="butt" /></Svg>
        <span>设置列</span>
      </ColumnsTab>
    </GridPanel>
  );
}

export default function App() {
  return (
    <Shell>
      <GlobalStyle />
      <Sidebar>
        <Logo />
        <SideRule />
        <NavList>
          {nav.map(([id, label]) => (
            <NavButton key={id} $active={id === "analyse"}>
              <Svg w={38} h={40} box="0 0 40 40">{navIcons[id]}</Svg>
              {label}
            </NavButton>
          ))}
        </NavList>
        <IconButton aria-label="菜单">
          <Svg w={36} h={29} sw={4}><path d="M0 2h36M0 10h36M0 19h36M0 27h36" strokeLinecap="butt" /></Svg>
        </IconButton>
      </Sidebar>

      <Workspace>
        <TopBar>
          <ToolGroup>
            <ToolButton>
              <ToolTile>
                <Svg w={36} color="#222" sw={2}>
                  <path d="M3 13A16 16 0 0 1 34 18M33 24A16 16 0 0 1 2 18" /><path d="M35 19l-6-5 6-3ZM1 17l6 5-6 3Z" fill="#222" strokeWidth="1" />
                </Svg>
              </ToolTile>
              刷新
            </ToolButton>
            <ToolButton>
              <ToolTile>
                <Svg w={44} h={38} color="#222">
                  <path d="M1 19Q9 4 22 4t21 15Q35 34 22 34T1 19Z" fill="#222" stroke="none" /><circle cx="22" cy="19" r="9" stroke="#fff" /><path d="M22 15a4 4 0 1 1-4 4" stroke="#fff" strokeWidth="2" />
                  <path d="M6 0l36 36" stroke="#fff" strokeWidth="4" /><path d="M4 2l35 36" strokeLinecap="butt" />
                </Svg>
              </ToolTile>
              详情/预览
            </ToolButton>
          </ToolGroup>
          <TopRight>
            <SearchBox $width={640} $height={67}>
              <BareInput placeholder="分析结果搜索" aria-label="分析结果搜索" />
              <IconButton aria-label="日期">
                <Svg w={40} h={38} color="#757575">
                  <rect x="2" y="5" width="36" height="31" rx="2" /><path d="M2 5h36v6H2ZM10 1v4M30 1v4" fill="#757575" />
                  <path d="M7 20h7M17 20h7M27 20h7M7 28h7M17 28h7M27 28h7" strokeWidth="5" strokeLinecap="butt" />
                </Svg>
              </IconButton>
              <IconButton aria-label="搜索"><Magnifier /></IconButton>
            </SearchBox>
            <NoticeButton aria-label="通知">
              <Svg w={28} color="#4caf50" sw={2}>
                <path d="M1 11q7-1 11-6 5-5 12-2 3 4 0 10-3 5-4 12-2 4-5 0Q10 18 3 15q-2-2-2-4Z" /><path d="M22 2h4v4ZM6 18l1 5 5-1Z" fill="#4caf50" strokeWidth="1" />
              </Svg>
            </NoticeButton>
            <IconButton aria-label="导出">
              <Svg w={38} h={42} color="#222" sw={4}>
                <path d="M18 38H4q-2 0-2-2V5q0-3 2-3h15" strokeLinecap="butt" /><path d="M18 0h3l11 11v9h-4v-5H18ZM20 30h9v-8l9 9-9 10v-7h-9Z" fill="#222" stroke="none" />
              </Svg>
            </IconButton>
            <WindowButtons>
              <WindowButton aria-label="用户">
                <Svg w={24} color="none" fill="#222"><circle cx="12" cy="7" r="7" /><path d="M0 24q0-8 6-10 6 4 12 0 6 2 6 10Z" /></Svg>
              </WindowButton>
              <WindowButton aria-label="固定">
                <Svg w={28} color="#222" sw={2}>
                  <path d="M18 1l9 8-3 1-6 5q1 5-2 8L5 12q5-3 9-2l5-6ZM9 16L1 27l11-8" strokeWidth="1.500" />
                </Svg>
              </WindowButton>
              <WindowButton aria-label="最小化"><Svg w={24} h={4} color="#222" sw={2}><path d="M1 2h22" /></Svg></WindowButton>
              <WindowButton aria-label="还原">
                <Svg w={26} color="#222" sw={2}><rect x="1" y="6" width="19" height="19" /><path d="M6 6V1h19v19h-5" strokeWidth="1.500" /></Svg>
              </WindowButton>
              <WindowButton aria-label="关闭"><Svg w={24} color="#222" sw={2}><path d="M1 1l22 22M23 1L1 23" /></Svg></WindowButton>
            </WindowButtons>
          </TopRight>
        </TopBar>

        <Body>
          <TreePanel>
            <OwnerPicker>
              <BareInput $width={328} placeholder="请选择/输入持有人/检材" aria-label="持有人" />
              <IconButton aria-label="展开"><Svg w={22} h={12} color="#bfc3cc" sw={2}><path d="M1 1l10 10L21 1" /></Svg></IconButton>
            </OwnerPicker>
            <TreeViewport>
              <TreeList>
                {tree.map((n) => (
                  <li key={n.name}>
                    <TreeRow $level={n.level} $active={n.active}>
                      <TreeToggle>
                        {n.open === "open" && <Svg w={24} h={13} color="#333" sw={1}><path d="M1 1l11 11L23 1" /></Svg>}
                        {n.open === "closed" && <Svg w={13} h={24} color="#333" sw={1}><path d="M1 1l11 11L1 23" /></Svg>}
                      </TreeToggle>
                      <TreeIcon>{treeIcons[n.icon]}</TreeIcon>
                      {n.name}
                      <TreeCount>{n.count}</TreeCount>
                    </TreeRow>
                  </li>
                ))}
              </TreeList>
              <ScrollThumb $length={507} $top={2} />
            </TreeViewport>
            <TreeFooter>
              <Dot $color="#ff665c" aria-label="红色标记" />
              <Dot $color="#ffd550" aria-label="黄色标记" />
              <Dot $color="#5abdfa" aria-label="蓝色标记" />
              <FooterTools>
                <FooterTool $divided aria-label="折叠">
                  <Svg w={26} h={36} color="#666" sw={3}><path d="M0 18h26M13 0v8M13 36v-8" strokeLinecap="butt" /><path d="M7 6h12l-6 7ZM7 30h12l-6-7Z" fill="#666" stroke="none" /></Svg>
                </FooterTool>
                <FooterTool $divided aria-label="网格">
                  <Svg w={26} color="#999" sw={1}><rect x="0" y="0" width="11" height="11" rx="1" /><rect x="15" y="0" width="11" height="11" rx="1" /><rect x="0" y="15" width="11" height="11" rx="1" /><rect x="15" y="15" width="11" height="11" rx="1" /></Svg>
                </FooterTool>
                <FooterTool $active aria-label="列表"><ListGlyph w={29} h={23} color="#7b7b7b" sw={3} /></FooterTool>
              </FooterTools>
            </TreeFooter>
          </TreePanel>

          <Main>
            <PathBar>
              <BranchButton aria-label="层级">
                <Svg w={34} h={40} color="#222">
                  <circle cx="8" cy="6" r="4" /><circle cx="8" cy="35" r="4" /><circle cx="28" cy="10" r="4" /><path d="M8 10v21M8 26q2-4 8-4 10 0 12-8" strokeWidth="4" />
                </Svg>
              </BranchButton>
              <Crumb href="#disk" $gap={8}><Windows size={29} /><span>pc-disk.E01</span></Crumb>
              <CrumbMark><Svg w={10} h={14} color="#222" sw={2}><path d="M1 1l7 6-7 6" /></Svg></CrumbMark>
              <Crumb href="#traces" $gap={2}><Feet size={48} /><span>用户痕迹</span></Crumb>
              <CrumbMark><Svg w={10} h={14} color="#222" sw={2}><path d="M1 1l7 6-7 6" /></Svg></CrumbMark>
              <Crumb href="#recent" $current><History size={34} /><span>最近访问的项目</span></Crumb>
              <PathTools>
                <SearchBox $width={512} $height={54}>
                  <BareInput $width={354} placeholder="在 最近访问的项目 中搜索" aria-label="在 最近访问的项目 中搜索" />
                  <IconButton aria-label="搜索"><Magnifier /></IconButton>
                </SearchBox>
                <AdvancedButton>
                  <Svg w={37} h={38} color="none" fill="#222">
                    <ellipse cx="17" cy="7" rx="16" ry="7" /><path d="M1 14q6 5 11 5l-1 6Q4 24 1 21ZM1 25q5 4 10 4l5 7Q4 36 1 31ZM14 16q16-2 19-4l-1 4q-8-3-14 2Z" />
                    <circle cx="24" cy="25" r="8" fill="#fff" stroke="#222" strokeWidth="4" /><path d="M30 31l6 6" stroke="#222" strokeWidth="4" />
                  </Svg>
                  高级
                </AdvancedButton>
              </PathTools>
            </PathBar>

            <Grid />

            <DetailPanel>
              <DetailHead>
                <h2>详细信息</h2>
                <DetailTools>
                  <IconButton aria-label="设置">
                    <Svg w={36} color="#888" sw={2}>
                      <path d="M15 1h6l1 5 3 1 4-3 4 4-3 4 1 3 4 1v5l-4 1-1 3 3 4-4 4-4-3-3 1-1 4h-6l-1-4-3-1-4 3-4-4 3-4-1-3-4-1v-5l4-1 1-3-3-4 4-4 4 3 3-1Z" /><circle cx="18" cy="18" r="6" />
                    </Svg>
                  </IconButton>
                  <IconButton aria-label="布局"><Svg w={38} h={38} color="#888" sw={2}><rect x="1" y="1" width="36" height="36" rx="3" /><path d="M22 6h10v26H22Z" fill="#888" stroke="none" /></Svg></IconButton>
                  <IconButton aria-label="关闭"><Svg w={38} color="#888" sw={2}><path d="M5 5l27 27M32 5L5 32" /></Svg></IconButton>
                </DetailTools>
              </DetailHead>
              <DetailBody>
                <Fields>
                  {fields.map(([k, v]) => (
                    <div key={k}><dt>{k}：</dt><dd>{v}</dd></div>
                  ))}
                </Fields>
                <ScrollThumb $length={526} $top={7} />
              </DetailBody>
            </DetailPanel>
          </Main>
        </Body>
      </Workspace>

      <DriveBubble aria-label="设备">
        <Svg w={38} h={58} color="none">
          <defs><linearGradient id="usb" x1="0" y1="0" x2="0" y2="1"><stop offset="0" stopColor="#6f97ff" /><stop offset="1" stopColor="#4876ff" /></linearGradient></defs>
          <path d="M7 0h24v13H7Z" fill="#c9ccd6" /><path d="M29 0h2v13h-2Z" fill="#8c909c" /><path d="M12 5h3v3h-3ZM20 5h3v3h-3Z" fill="#666" />
          <path d="M3 12h32q2 0 2 2v24q-1 18-18 19Q3 56 1 38V14q0-2 2-2Z" fill="#3862e0" /><path d="M3 12h29q2 0 2 2v24q-1 18-17 19Q2 54 1 38V14q0-2 2-2Z" fill="url(#usb)" />
        </Svg>
      </DriveBubble>
    </Shell>
  );
}
